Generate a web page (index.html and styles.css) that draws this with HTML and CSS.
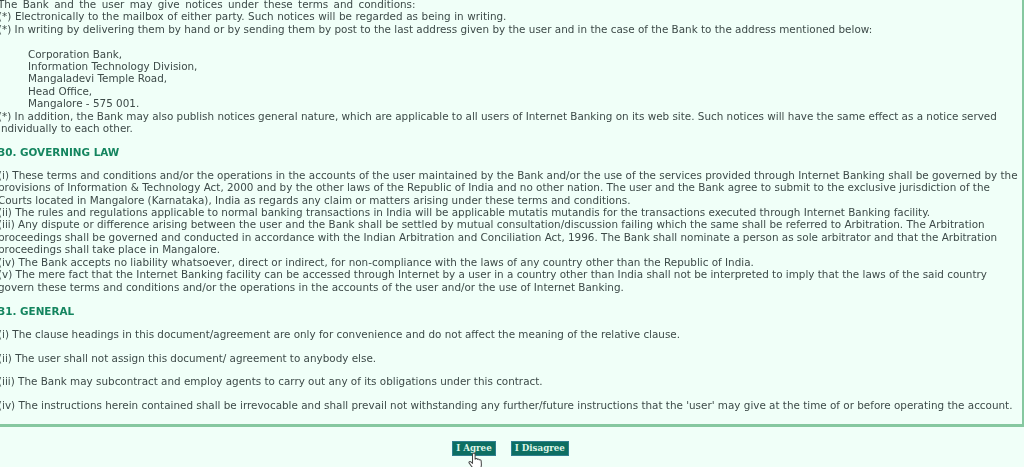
FILE: index.html
```html
<!DOCTYPE html>
<html lang="en">
<head>
<meta charset="UTF-8">
<meta name="viewport" content="width=device-width, initial-scale=1.0">
<title>Terms and Conditions</title>
<link rel="stylesheet" href="styles.css">
</head>
<body>

<div id="terms">
    <p class="clause">
        <span class="wide">The Bank and the user may give notices under these terms and conditions:</span><br>
        <span class="slight">(*) Electronically to the mailbox of either party. Such notices will be regarded as being in writing.</span><br>
        (*) In writing by delivering them by hand or by sending them by post to the last address given by the user and in the case of the Bank to the address mentioned below:
    </p>
    <p class="address">
        Corporation Bank,<br>
        Information Technology Division,<br>
        Mangaladevi Temple Road,<br>
        Head Office,<br>
        Mangalore - 575 001.
    </p>
    <p class="clause">
        (*) In addition, the Bank may also publish notices general nature, which are applicable to all users of Internet Banking on its web site. Such notices will have the same effect as a notice served<br>
        individually to each other.
    </p>

    <h3 class="heading">30. GOVERNING LAW</h3>
    <p class="clause">
        (i) These terms and conditions and/or the operations in the accounts of the user maintained by the Bank and/or the use of the services provided through Internet Banking shall be governed by the<br>
        provisions of Information &amp; Technology Act, 2000 and by the other laws of the Republic of India and no other nation. The user and the Bank agree to submit to the exclusive jurisdiction of the<br>
        Courts located in Mangalore (Karnataka), India as regards any claim or matters arising under these terms and conditions.<br>
        (ii) The rules and regulations applicable to normal banking transactions in India will be applicable mutatis mutandis for the transactions executed through Internet Banking facility.<br>
        (iii) Any dispute or difference arising between the user and the Bank shall be settled by mutual consultation/discussion failing which the same shall be referred to Arbitration. The Arbitration<br>
        proceedings shall be governed and conducted in accordance with the Indian Arbitration and Conciliation Act, 1996. The Bank shall nominate a person as sole arbitrator and that the Arbitration<br>
        proceedings shall take place in Mangalore.<br>
        (iv) The Bank accepts no liability whatsoever, direct or indirect, for non-compliance with the laws of any country other than the Republic of India.<br>
        (v) The mere fact that the Internet Banking facility can be accessed through Internet by a user in a country other than India shall not be interpreted to imply that the laws of the said country<br>
        govern these terms and conditions and/or the operations in the accounts of the user and/or the use of Internet Banking.
    </p>

    <h3 class="heading late">31. GENERAL</h3>
    <p class="clause spaced">(i) The clause headings in this document/agreement are only for convenience and do not affect the meaning of the relative clause.</p>
    <p class="clause spaced">(ii) The user shall not assign this document/ agreement to anybody else.</p>
    <p class="clause spaced">(iii) The Bank may subcontract and employ agents to carry out any of its obligations under this contract.</p>
    <p class="clause spaced">(iv) The instructions herein contained shall be irrevocable and shall prevail not withstanding any further/future instructions that the 'user' may give at the time of or before operating the account.</p>
</div>

<div id="actions">
    <button class="button">I Agree</button>
    <button class="button">I Disagree</button>
    <svg class="cursor" width="16" height="18" viewBox="0 0 14 16">
        <path d="M4.500 1.200c.8-.6 1.700 0 1.700.9v4.600l.4-.9c.8-.3 1.400 0 1.600.7.7-.4 1.400-.2 1.700.5.8-.3 1.600.1 1.700 1l.2 3.600c0 1.300-.5 2.300-1.100 3.200v1.400H5v-1.400C3.700 13.800 2 11.500.9 9.800c-.5-.8.3-1.700 1.200-1.200l1.800 1.400V2.100c0-.4.2-.7.6-.9z" fill="#fff" stroke="#444" stroke-width=".9"/>
    </svg>
</div>

</body>
</html>
```

FILE: styles.css
```css
html, body {
    height: 100%;
}

body {
    margin: 0;
    overflow: hidden;
    background-color: #f0fff8;
    color: #3d4a48;
    font-family: 'DejaVu Sans', Verdana, sans-serif;
    font-size: 10.4px;
    line-height: 12.4px;
    filter: blur(0.4px);
}

#terms {
    height: 429px;
    box-sizing: border-box;
    margin: -2px 0 0 -2px;
    overflow: hidden;
    white-space: nowrap;
    border-right: 2px solid #86c8a0;
    border-bottom: 3px solid #86c8a0;
}

.clause {
    margin: 0;
}

.wide {
    word-spacing: 2.1px;
}

.slight {
    word-spacing: 0.3px;
}

.address {
    margin: 12.4px 0 0 30px;
}

.heading {
    margin: 11.5px 0 10.5px;
    color: #14855f;
    font-size: 10.4px;
    line-height: 12.4px;
    font-weight: bold;
}

.late {
    margin-top: 12.5px;
}

.spaced {
    margin-bottom: 11px;
}

#actions {
    position: relative;
    display: flex;
    justify-content: center;
    gap: 15px;
    padding: 14px 3px 0 0;
}

.button {
    height: 15px;
    padding: 0 3px;
    border: 1px solid #2f7f8f;
    background-color: #0d6e62;
    color: #dff5e8;
    font-family: 'DejaVu Serif', serif;
    font-size: 8.7px;
    font-weight: bold;
    line-height: 13px;
}

.cursor {
    position: absolute;
    left: 468px;
    top: 25px;
}
```
